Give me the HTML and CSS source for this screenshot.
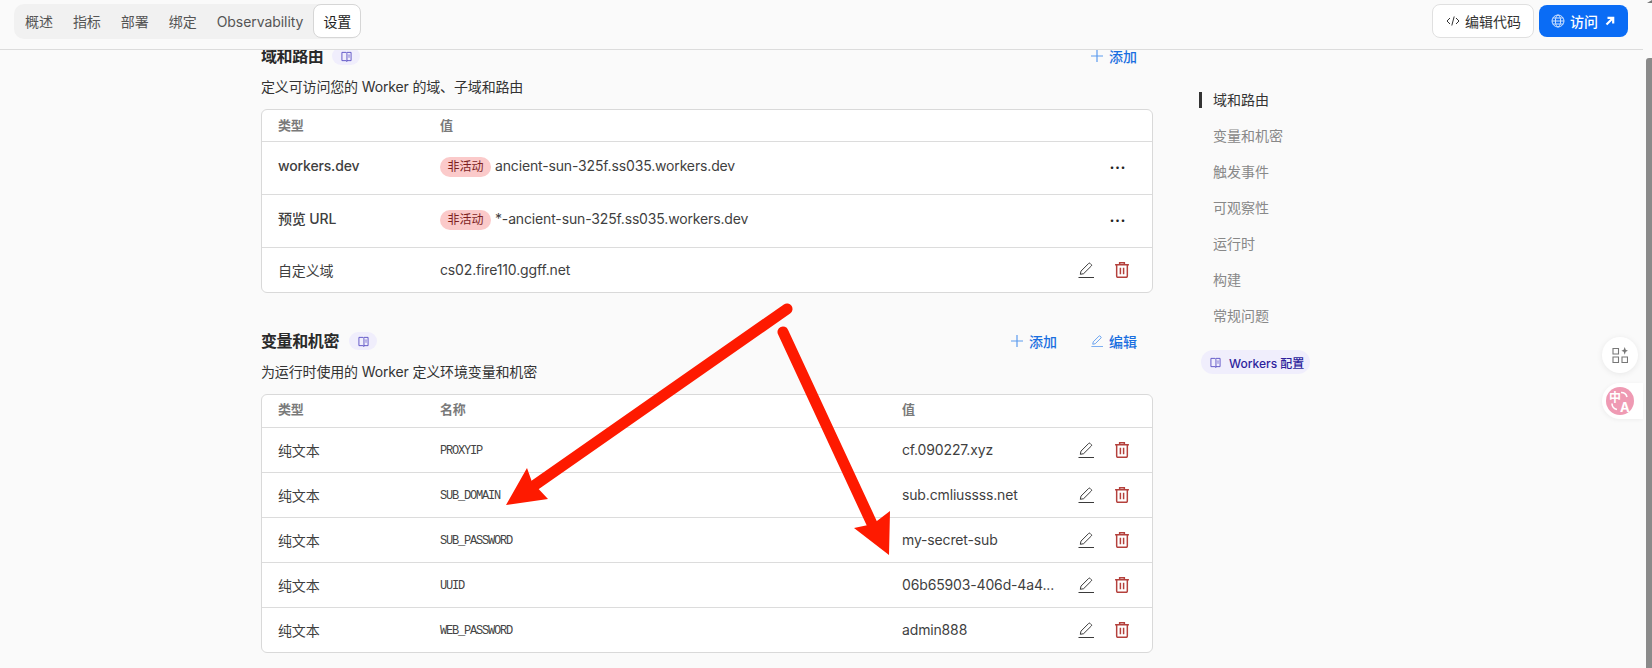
FILE: index.html
```html
<!DOCTYPE html>
<html lang="zh-CN">
<head>
<meta charset="utf-8">
<title>Worker 设置</title>
<link rel="stylesheet" href="styles.css">
</head>
<body>
<svg class="sprite" aria-hidden="true">
  <symbol id="i-edit" viewBox="0 0 16 16"><path d="M.5 15.5h15.5M2.3 12.3l.7-3.2 7.7-7.7a1 1 0 0 1 1.4 0l1.2 1.2a1 1 0 0 1 0 1.4l-7.7 7.7z"/></symbol>
  <symbol id="i-del" viewBox="0 0 13 15"><path d="M4.3 2.3V.8h4.4v1.5M0 2.6h13M1.5 2.6v10.6a1.2 1.2 0 0 0 1.2 1.2h7.6a1.2 1.2 0 0 0 1.2-1.2V2.6M5 5.3v6.3M8 5.3v6.3"/></symbol>
  <symbol id="i-book" viewBox="0 0 12 12"><path d="M1 1.5h4.5l1 1v9l-1-1H1zM6.5 1.5H11v9H6.5M8 4.5h1.5M8 6.5h1.5"/></symbol>
  <symbol id="i-plus" viewBox="0 0 12 12"><path d="M6 0v12M0 6h12"/></symbol>
</svg>
<div class="page">
  <header class="topbar">
    <nav class="tabs">
      <a class="tab">概述</a>
      <a class="tab">指标</a>
      <a class="tab">部署</a>
      <a class="tab">绑定</a>
      <a class="tab">Observability</a>
      <a class="tab tab-active">设置</a>
    </nav>
    <div class="top-actions">
      <button class="btn btn-plain">
        <svg class="ico14" viewBox="0 0 14 14"><path d="M4 4 1 7l3 3M10 4l3 3-3 3M8.2 2.5 5.8 11.5"/></svg>
        编辑代码
      </button>
      <button class="btn btn-primary">
        <svg class="ico14" viewBox="0 0 14 14"><circle cx="7" cy="7" r="6"/><ellipse cx="7" cy="7" rx="2.6" ry="6"/><path d="M1 7h12M1.8 4h10.4M1.8 10h10.4"/></svg>
        访问
        <svg class="ico-arrow" viewBox="0 0 10 10"><path d="M1.5 8.5 8 2M2.5 1.8H8.2V7.5"/></svg>
      </button>
    </div>
  </header>

  <main class="layout">
    <div class="content">
      <section class="sec sec-first">
        <div class="sec-head">
          <h2 class="sec-title">域和路由</h2>
          <span class="doc-badge"><svg class="ico-book"><use href="#i-book"/></svg></span>
          <div class="sec-actions">
            <a class="link"><svg class="ico-link"><use href="#i-plus"/></svg>添加</a>
          </div>
        </div>
        <p class="sec-desc">定义可访问您的 Worker 的域、子域和路由</p>
        <div class="tbl-wrap">
          <table class="tbl">
            <colgroup><col class="c-type"><col><col class="c-act"></colgroup>
            <tr class="row-head"><th>类型</th><th>值</th><th></th></tr>
            <tr class="row-tall">
              <td class="strong">workers.dev</td>
              <td><span class="pill-off">非活动</span>ancient-sun-325f.ss035.workers.dev</td>
              <td><div class="more">···</div></td>
            </tr>
            <tr class="row-tall">
              <td class="strong">预览 URL</td>
              <td><span class="pill-off">非活动</span>*-ancient-sun-325f.ss035.workers.dev</td>
              <td><div class="more">···</div></td>
            </tr>
            <tr class="row">
              <td>自定义域</td>
              <td>cs02.fire110.ggff.net</td>
              <td><div class="acts"><svg class="ico-edit"><use href="#i-edit"/></svg><svg class="ico-del"><use href="#i-del"/></svg></div></td>
            </tr>
          </table>
        </div>
      </section>

      <section class="sec sec-second">
        <div class="sec-head">
          <h2 class="sec-title">变量和机密</h2>
          <span class="doc-badge"><svg class="ico-book"><use href="#i-book"/></svg></span>
          <div class="sec-actions">
            <a class="link"><svg class="ico-link"><use href="#i-plus"/></svg>添加</a>
            <a class="link"><svg class="ico-link"><use href="#i-edit"/></svg>编辑</a>
          </div>
        </div>
        <p class="sec-desc">为运行时使用的 Worker 定义环境变量和机密</p>
        <div class="tbl-wrap">
          <table class="tbl">
            <colgroup><col class="c-type"><col class="c-name"><col><col class="c-act"></colgroup>
            <tr class="row-head row-head-lg"><th>类型</th><th>名称</th><th>值</th><th></th></tr>
            <tr class="row"><td>纯文本</td><td class="mono">PROXYIP</td><td>cf.090227.xyz</td><td><div class="acts"><svg class="ico-edit"><use href="#i-edit"/></svg><svg class="ico-del"><use href="#i-del"/></svg></div></td></tr>
            <tr class="row"><td>纯文本</td><td class="mono">SUB_DOMAIN</td><td>sub.cmliussss.net</td><td><div class="acts"><svg class="ico-edit"><use href="#i-edit"/></svg><svg class="ico-del"><use href="#i-del"/></svg></div></td></tr>
            <tr class="row"><td>纯文本</td><td class="mono">SUB_PASSWORD</td><td>my-secret-sub</td><td><div class="acts"><svg class="ico-edit"><use href="#i-edit"/></svg><svg class="ico-del"><use href="#i-del"/></svg></div></td></tr>
            <tr class="row"><td>纯文本</td><td class="mono">UUID</td><td>06b65903-406d-4a4...</td><td><div class="acts"><svg class="ico-edit"><use href="#i-edit"/></svg><svg class="ico-del"><use href="#i-del"/></svg></div></td></tr>
            <tr class="row"><td>纯文本</td><td class="mono">WEB_PASSWORD</td><td>admin888</td><td><div class="acts"><svg class="ico-edit"><use href="#i-edit"/></svg><svg class="ico-del"><use href="#i-del"/></svg></div></td></tr>
          </table>
        </div>
      </section>
    </div>

    <aside class="side">
      <ul class="side-list">
        <li class="side-item"><a class="side-link side-link-active">域和路由</a></li>
        <li class="side-item"><a class="side-link">变量和机密</a></li>
        <li class="side-item"><a class="side-link">触发事件</a></li>
        <li class="side-item"><a class="side-link">可观察性</a></li>
        <li class="side-item"><a class="side-link">运行时</a></li>
        <li class="side-item"><a class="side-link">构建</a></li>
        <li class="side-item"><a class="side-link">常规问题</a></li>
      </ul>
      <a class="side-pill"><svg class="ico-book ico-book-side"><use href="#i-book"/></svg>Workers 配置</a>
    </aside>
  </main>

  <div class="float-apps">
    <svg class="ico-apps" viewBox="0 0 16 16"><path d="M1 1.5h5.5V7H1zM1 10h5.5v5.5H1zM10 10h5.5v5.5H10z"/><path class="spark" d="M12.7 0l1 2.8 2.3 1-2.3 1-1 3-1-3-2.3-1 2.3-1z"/></svg>
  </div>
  <div class="float-trans">
    <div class="trans-disc">
      <svg class="ico-trans" viewBox="0 0 28 28">
        <text class="t-zh" x="3" y="14.5">中</text>
        <text class="t-en" x="14" y="24.5">A</text>
        <path d="M15 5.5a6 6 0 0 1 6 4.5M6 16.5a6 6 0 0 0 5 6"/>
      </svg>
    </div>
  </div>

  <div class="scroll-thumb"></div>
  <div class="scroll-arrow"></div>

  <svg class="marks" viewBox="0 0 1652 668">
    <path class="mark-line" d="M787 309 535 485"/>
    <path class="mark-head" d="M506 505 527 468 532 482 548 499z"/>
    <path class="mark-line" d="M783 332 873 526"/>
    <path class="mark-head" d="M889 555 854 528 873 524 890 511z"/>
  </svg>
</div>
</body>
</html>
```

FILE: styles.css
```css
* { box-sizing: border-box; }
html, body { margin: 0; padding: 0; }
body {
  font-family: Inter, "Noto Sans CJK SC", sans-serif;
  font-size: 14px;
  letter-spacing: -0.15px;
  color: #3f3f3f;
  background: #fafafa;
}
.sprite { display: none; }
.page {
  position: relative;
  width: 1652px;
  height: 668px;
  overflow: hidden;
  background: #fafafa;
}

/* top bar */
.topbar {
  position: relative;
  z-index: 2;
  width: 1643px;
  height: 50px;
  padding: 4px 15px 0 14px;
  display: flex;
  justify-content: space-between;
  align-items: flex-start;
  background: #fafafa;
  border-bottom: 1px solid #dcdcdc;
}
.tabs {
  display: flex;
  height: 35px;
  padding-left: 1px;
  letter-spacing: -0.05px;
  background: #f1f1f1;
  border-radius: 10px;
}
.tab {
  height: 34px;
  padding: 0 10px;
  display: flex;
  align-items: center;
  color: #555;
  white-space: nowrap;
}
.tab-active {
  padding: 0 9px;
  color: #222;
  background: #fff;
  border: 1px solid #d6d6d6;
  border-radius: 8px;
}
.top-actions { display: flex; gap: 5px; align-items: flex-start; }
.btn {
  font: inherit;
  letter-spacing: 0;
  display: flex;
  align-items: center;
  border-radius: 8px;
  white-space: nowrap;
}
.btn-plain {
  width: 102px;
  height: 34px;
  padding: 0 0 0 13px;
  gap: 5px;
  background: #fff;
  color: #333;
  border: 1px solid #e0e0e0;
}
.btn-primary {
  width: 89px;
  height: 32px;
  margin-top: 1px;
  padding: 0 0 0 12px;
  gap: 5px;
  background: #0a6cf5;
  color: #fff;
  border: 0;
  font-weight: 500;
}
.ico14 { width: 14px; height: 14px; fill: none; stroke: currentColor; stroke-width: 1; }
.btn-primary .ico14 { stroke: #cfe2ff; }
.ico-arrow { width: 10px; height: 10px; margin-left: 2px; fill: none; stroke: #fff; stroke-width: 2.2; }

/* layout */
.layout {
  display: flex;
  gap: 46px;
  padding-left: 261px;
}
.content { width: 892px; flex: none; }
.sec-first { margin-top: -5px; }
.sec-second { margin-top: 37px; }
.sec-head { display: flex; align-items: center; height: 22px; }
.sec-title {
  margin: 0;
  font-size: 16px;
  line-height: 22px;
  font-weight: 700;
  letter-spacing: -0.4px;
  color: #2a2a2a;
}
.doc-badge {
  margin-left: 9px;
  width: 28px;
  height: 18px;
  border-radius: 9px;
  background: #f0eefc;
  display: flex;
  align-items: center;
  justify-content: center;
}
.sec-second .doc-badge { margin-left: 10px; }
.ico-book { width: 11px; height: 11px; fill: none; stroke: #5b50c4; stroke-width: 1; }
.sec-actions { margin-left: auto; margin-right: 16px; display: flex; gap: 34px; }
.link {
  display: flex;
  align-items: center;
  gap: 6px;
  color: #1a6fe0;
  font-weight: 500;
  letter-spacing: 0;
}
.ico-link { width: 12px; height: 12px; fill: none; stroke: #5c9bee; stroke-width: 1.2; }
.sec-desc {
  margin: 10px 0 12px;
  line-height: 20px;
  color: #333;
}

/* tables */
.tbl-wrap {
  background: #fff;
  border: 1px solid #d9d9d9;
  border-radius: 6px;
  overflow: hidden;
}
.tbl {
  width: 100%;
  border-collapse: collapse;
  table-layout: fixed;
}
.c-type { width: 162px; }
.c-name { width: 462px; }
.c-act { width: 92px; }
.tbl th, .tbl td {
  padding: 0 0 0 16px;
  text-align: left;
  white-space: nowrap;
}
.tbl th {
  padding-bottom: 2px;
  font-size: 13px;
  font-weight: 600;
  color: #7a7a7a;
}
.row-head { height: 31px; border-bottom: 1px solid #dcdcdc; }
.row-head-lg { height: 32px; }
.tbl .row-head-lg th { padding-bottom: 4px; }
.row { height: 45px; border-bottom: 1px solid #dcdcdc; }
.row-tall { height: 53px; border-bottom: 1px solid #dcdcdc; }
.tbl tr:last-child { border-bottom: 0; }
.row-tall td { vertical-align: top; padding-top: 14px; line-height: 20px; }
.strong { font-weight: 450; }
.tbl td.mono {
  padding-top: 2px;
  font-family: "Liberation Mono", monospace;
  font-size: 12px;
  letter-spacing: -1.2px;
  color: #444;
}
.pill-off {
  display: inline-block;
  width: 51px;
  height: 20px;
  margin: 1px 4px 0 0;
  line-height: 20px;
  text-align: center;
  font-size: 12px;
  letter-spacing: 0;
  color: #7d1f1f;
  background: #fbcaca;
  border-radius: 10px;
  vertical-align: top;
}
.more {
  text-align: right;
  padding: 2px 26px 0 0;
  color: #222;
  font-weight: 700;
  font-size: 15px;
  letter-spacing: 0.5px;
  line-height: 20px;
}
.acts {
  display: flex;
  justify-content: flex-end;
  align-items: center;
  gap: 21px;
  padding-right: 23px;
}
.ico-edit { width: 16px; height: 16px; fill: none; stroke: #3a3a3a; stroke-width: 1; }
.ico-del { width: 14px; height: 16px; fill: none; stroke: #b4403c; stroke-width: 1.4; }

/* side nav */
.side { width: 130px; flex: none; padding-top: 32px; letter-spacing: 0; }
.side-list { list-style: none; margin: 0; padding: 0; }
.side-item { height: 36px; display: flex; align-items: center; }
.side-link {
  display: block;
  line-height: 16px;
  padding-left: 11px;
  border-left: 3px solid transparent;
  color: #888;
}
.side-link-active { color: #333; border-left-color: #333; }
.side-pill {
  display: flex;
  align-items: center;
  gap: 8px;
  width: 109px;
  height: 24px;
  margin: 16px 0 0 2px;
  padding-left: 9px;
  border-radius: 12px;
  background: #f0eefc;
  color: #2d1f9c;
  font-size: 12px;
  font-weight: 500;
  white-space: nowrap;
}
.ico-book-side { flex: none; width: 11px; height: 11px; }

/* floating widgets */
.float-apps {
  position: absolute;
  left: 1602px;
  top: 337px;
  width: 36px;
  height: 36px;
  border-radius: 50%;
  background: #fff;
  box-shadow: 0 1px 6px rgba(0, 0, 0, .08);
  display: flex;
  align-items: center;
  justify-content: center;
}
.ico-apps { width: 16px; height: 16px; fill: none; stroke: #777; stroke-width: 1.1; }
.ico-apps .spark { fill: #777; stroke: none; }
.float-trans {
  position: absolute;
  left: 1602px;
  top: 383px;
  width: 41px;
  height: 36px;
  border-radius: 18px 0 0 18px;
  background: #fff;
  box-shadow: -1px 1px 4px rgba(0, 0, 0, .05);
  display: flex;
  align-items: center;
  padding-left: 4px;
}
.trans-disc {
  width: 28px;
  height: 28px;
  border-radius: 50%;
  background: #ef9ab3;
}
.ico-trans { display: block; width: 28px; height: 28px; fill: none; stroke: #fff; stroke-width: 1.6; }
.t-zh, .t-en { fill: #fff; stroke: none; font-weight: 700; font-family: "Noto Sans CJK SC", sans-serif; }
.t-zh { font-size: 12px; }
.t-en { font-size: 13px; font-family: Inter, sans-serif; }
.scroll-thumb {
  position: absolute;
  left: 1646px;
  top: 58px;
  width: 6px;
  height: 610px;
  background: #8a8a8a;
  border-radius: 3px 0 0 0;
}
.scroll-arrow {
  position: absolute;
  left: 1647px;
  top: 0;
  width: 5px;
  height: 3px;
  background: #777;
  clip-path: polygon(0 100%, 100% 0, 100% 100%);
}

/* red annotation arrows */
.marks {
  position: absolute;
  left: 0;
  top: 0;
  width: 1652px;
  height: 668px;
  z-index: 3;
  pointer-events: none;
}
.mark-line { fill: none; stroke: #fe1a00; stroke-width: 11; stroke-linecap: round; }
.mark-head { fill: #fe1a00; }
```
